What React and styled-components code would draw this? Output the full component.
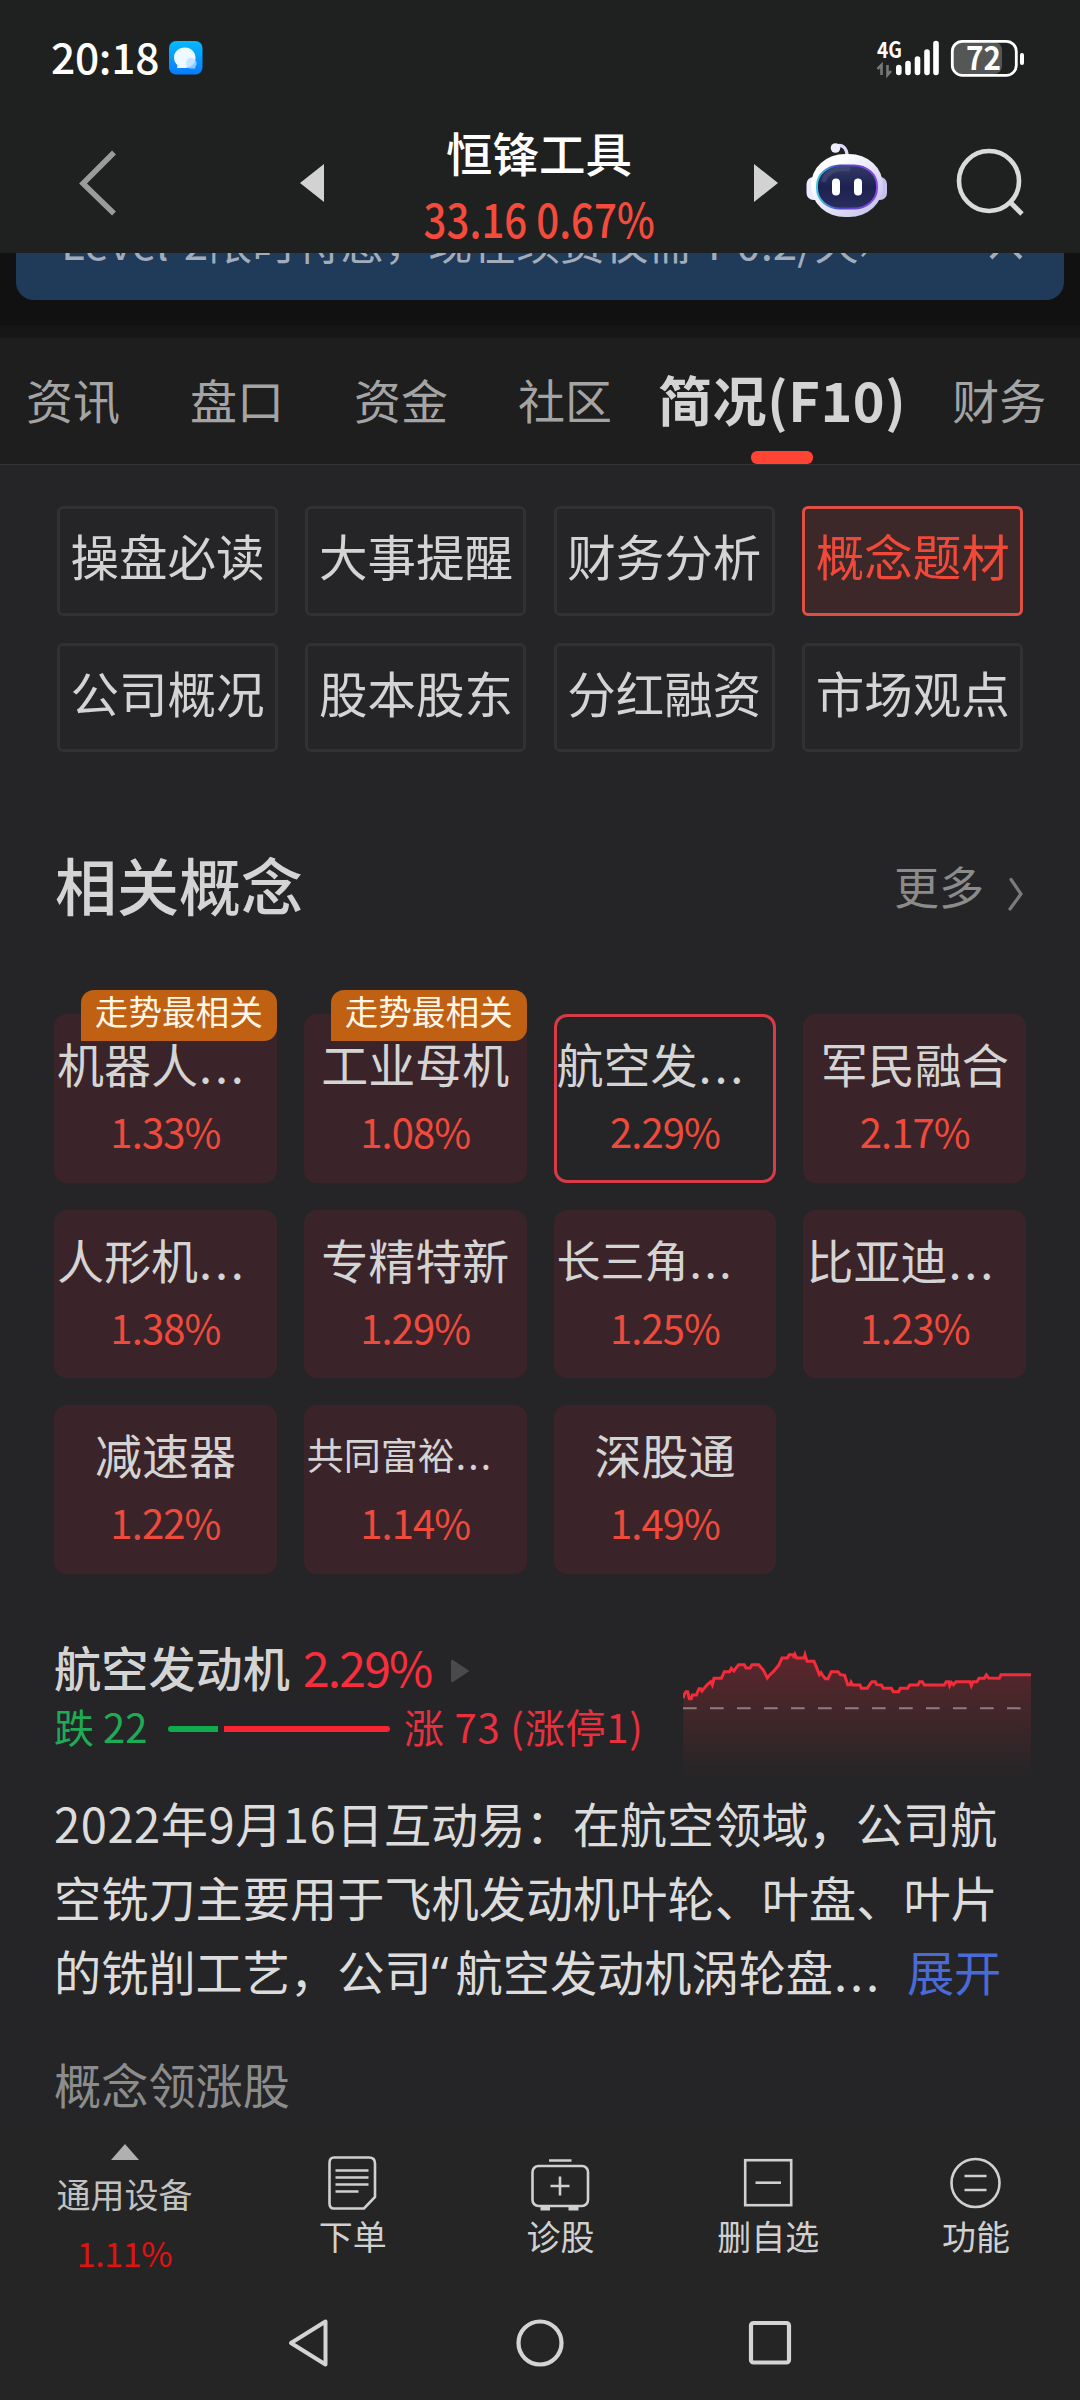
import styled, { createGlobalStyle } from "styled-components";

const subMenus = [
  "操盘必读", "大事提醒", "财务分析", "概念题材",
  "公司概况", "股本股东", "分红融资", "市场观点",
];

const concepts = [
  { name: "机器人", cut: true, rate: "1.33%", badge: true },
  { name: "工业母机", rate: "1.08%", badge: true },
  { name: "航空发", cut: true, rate: "2.29%", active: true },
  { name: "军民融合", rate: "2.17%" },
  { name: "人形机", cut: true, rate: "1.38%" },
  { name: "专精特新", rate: "1.29%" },
  { name: "长三角", cut: true, rate: "1.25%", size: 44 },
  { name: "比亚迪", cut: true, rate: "1.23%" },
  { name: "减速器", rate: "1.22%" },
  { name: "共同富裕", cut: true, rate: "1.14%", size: 37 },
  { name: "深股通", rate: "1.49%" },
];

const linePoints =
  "70,234 72,224 78,215 83,215 88,236 94,236 97,225 109,225 117,206 122,206 126,213 134,203 140,196 152,185 157,195 162,175 184,175 193,155 209,155 214,145 222,153 228,144 236,134 253,134 258,144 270,144 276,134 296,134 310,150 317,164 322,174 330,164 340,155 356,136 366,114 382,114 388,104 400,104 402,114 405,104 410,114 432,114 435,104 441,124 462,124 470,143 478,164 483,158 488,166 496,176 504,176 514,155 534,155 541,164 554,166 563,194 570,194 573,186 578,195 600,195 604,205 622,205 631,191 636,185 646,185 650,194 664,195 670,205 694,205 700,215 716,215 721,205 743,205 749,195 774,195 779,185 787,185 793,195 853,195 859,185 866,185 869,197 874,187 880,194 888,185 930,185 934,197 939,185 951,185 957,175 973,175 979,165 986,174 1018,175 1023,164 1113,164";

const StatusIcons = () => (
  <svg width="150" height="40" viewBox="0 0 150 40">
    <text x="1" y="20" fontSize="22" fontWeight="700" fill="#fff" textLength="25" lengthAdjust="spacingAndGlyphs">4G</text>
    <path d="M5.500 37V27L1.500 31M11.500 27V37L15 33" stroke="#777" strokeWidth="2.600" fill="none" />
    <path d="M22.800 29.500V34.500M32 25.500V34.500M41.500 21V34.500M51 14V34.500M60 5.500V34.500" stroke="#fff" strokeWidth="5.600" strokeLinecap="round" />
    <rect x="77" y="4" width="49" height="32" rx="8" fill="#555756" />
    <rect x="76.300" y="3.300" width="64" height="34" rx="10" stroke="#fff" strokeWidth="2.800" fill="none" />
    <text x="90" y="32" fontSize="33" fontWeight="700" fill="#fff" textLength="35" lengthAdjust="spacingAndGlyphs">72</text>
    <rect x="144" y="15" width="4" height="12" rx="2" fill="#fff" />
  </svg>
);

const MessageIcon = () => (
  <svg width="34" height="34" viewBox="0 0 34 34">
    <defs>
      <linearGradient id="msg" x1="0" y1="0" x2="0" y2="1">
        <stop offset="0" stopColor="#05b9ff" />
        <stop offset="1" stopColor="#087bff" />
      </linearGradient>
    </defs>
    <rect width="33.500" height="33.500" rx="7" fill="url(#msg)" />
    <path d="M16 6.500C9.500 6.500 5 11 5 16.500c0 3.500 1.700 6 3.500 7.700L8 27h8c6 0 10.500-4.500 10.500-10.300S22 6.500 16 6.500z" fill="#edf8ff" />
    <path d="M21 17a5.500 5.500 0 0 0 0 10.500h5.500l-.4-1.600C30 22 26 16 21 17z" fill="#b5dfff" opacity=".75" />
  </svg>
);

const Robot = () => (
  <svg width="82" height="78" viewBox="0 0 82 78">
    <defs>
      <linearGradient id="shell" x1="0" y1="0" x2="1" y2="1">
        <stop offset="0.250" stopColor="#ffffff" />
        <stop offset="1" stopColor="#bdb9ea" />
      </linearGradient>
      <linearGradient id="rim" x1="0" y1="0" x2="1" y2="0">
        <stop offset="0" stopColor="#45c6e8" />
        <stop offset="0.400" stopColor="#4a3fc0" />
        <stop offset="1" stopColor="#8a4be8" />
      </linearGradient>
      <linearGradient id="face" x1="0" y1="0" x2="0" y2="1">
        <stop offset="0" stopColor="#343a66" />
        <stop offset="0.500" stopColor="#1c2150" />
        <stop offset="1" stopColor="#2a2e5e" />
      </linearGradient>
    </defs>
    <path d="M29 7C36 3 41 8 41 16" stroke="#dcdaf6" strokeWidth="3.400" fill="none" />
    <circle cx="29.500" cy="8" r="4.800" fill="#eeedff" />
    <rect x="0.500" y="37" width="16" height="23" rx="7" fill="#eceaff" />
    <rect x="65" y="37" width="16" height="23" rx="7" fill="#c4c0f0" />
    <rect x="5" y="14" width="72" height="63" rx="34" ry="31" fill="url(#shell)" />
    <rect x="11" y="25.500" width="60" height="43" rx="23" ry="20" fill="url(#face)" stroke="url(#rim)" strokeWidth="2" />
    <path d="M18 40c3-9 13-12 24-11" stroke="#555b85" strokeWidth="5" fill="none" opacity=".45" strokeLinecap="round" />
    <rect x="26" y="38.500" width="8" height="17" rx="4" fill="#fff" />
    <rect x="48" y="38.500" width="8" height="17" rx="4" fill="#fff" />
  </svg>
);

const toolItems = [
  {
    label: "下单",
    icon: (
      <>
        <path d="M12 2.500H47Q53 2.500 53 8.500V42L42 53.500H12Q7.500 53.500 7.500 48.500V8Q7.500 2.500 12 2.500Z" />
        <path d="M13.500 15.500H46.500M13.500 22.500H46.500M13.500 29.500H46.500M13.500 36.500H36.500" />
      </>
    ),
  },
  {
    label: "诊股",
    icon: (
      <>
        <path d="M19 5.500H41.500M30 21.500V40.500M20.500 31H39.500" />
        <rect x="2.500" y="11" width="55.500" height="40" rx="6" />
        <path d="M10.500 53.500H20M38.500 53.500H48.500" strokeWidth="4" />
      </>
    ),
  },
  {
    label: "删自选",
    icon: (
      <>
        <rect x="7.200" y="5.200" width="46" height="45" />
        <path d="M17.500 27.700H43" />
      </>
    ),
  },
  {
    label: "功能",
    icon: (
      <>
        <circle cx="30.500" cy="28" r="24" />
        <path d="M19.500 21H41.500M19.500 35H41.500" />
      </>
    ),
  },
];

const App = () => {
  return (
    <Phone>
      <GlobalStyle />

      <StatusBar>
        <Clock>20:18</Clock>
        <MessageIcon />
        <StatusRight><StatusIcons /></StatusRight>
      </StatusBar>

      <Header>
        <svg width="40" height="68" viewBox="0 0 40 68">
          <path d="M36 3.500L5 34.500L36 64.500" stroke="#9b9b9b" strokeWidth="5.500" fill="none" />
        </svg>
        <PrevIcon width="24" height="38" viewBox="0 0 24 38"><path d="M0 19L24 0V38Z" fill="#d2d2d2" /></PrevIcon>
        <StockTitle>
          <StockName>恒锋工具</StockName>
          <StockPrice>33.16 0.67%</StockPrice>
        </StockTitle>
        <svg width="24" height="38" viewBox="0 0 24 38"><path d="M24 19L0 0V38Z" fill="#d2d2d2" /></svg>
        <RobotBtn><Robot /></RobotBtn>
        <svg width="70" height="70" viewBox="0 0 70 70">
          <circle cx="33" cy="33" r="30" stroke="#dadada" strokeWidth="4.600" fill="none" />
          <path d="M54 54L66 66" stroke="#dadada" strokeWidth="4.800" />
        </svg>
      </Header>

      <Promo>
        <Banner>
          <BannerText>Level-2限时特惠，现在续费仅需￥0.2/天›</BannerText>
          <svg width="34" height="60" viewBox="0 0 34 60">
            <path d="M2 17L32 47M32 17L2 47" stroke="#a3adba" strokeWidth="4" />
          </svg>
        </Banner>
      </Promo>

      <Tabs>
        <Tab>资讯</Tab>
        <Tab>盘口</Tab>
        <Tab>资金</Tab>
        <Tab>社区</Tab>
        <Tab $active>简况(F10)</Tab>
        <Tab>财务</Tab>
      </Tabs>

      <Main>
        <SubMenu>
          {subMenus.map((m) => (
            <SubBtn key={m} $active={m === "概念题材"}>{m}</SubBtn>
          ))}
        </SubMenu>

        <SectionHead>
          <SectionTitle>相关概念</SectionTitle>
          <More>
            更多
            <svg width="16" height="36" viewBox="0 0 16 36">
              <path d="M3 3.500L13 18L2 33" stroke="#7b7b7b" strokeWidth="3.200" fill="none" strokeLinecap="round" />
            </svg>
          </More>
        </SectionHead>

        <CardGrid>
          {concepts.map((c) => (
            <Card key={c.name} $active={c.active}>
              {c.badge && <Badge>走势最相关</Badge>}
              <CardName $cut={c.cut} $size={c.size}>
                {c.name}{c.cut && <Dots>...</Dots>}
              </CardName>
              <CardRate>{c.rate}</CardRate>
            </Card>
          ))}
        </CardGrid>

        <Detail>
          <div>
            <DetailTop>
              <DetailName>航空发动机</DetailName>
              <DetailRate>2.29%</DetailRate>
              <svg width="20" height="24" viewBox="0 0 20 24"><path d="M1 2Q1 0 3 1L18 11Q20 12 18 13L3 23Q1 24 1 22Z" fill="#4a4a4c" /></svg>
            </DetailTop>
            <UpDown>
              <Down>跌 22</Down>
              <DownLine />
              <UpLine />
              <Up>涨 73 (涨停1)</Up>
            </UpDown>
          </div>
          <Chart viewBox="69 75 1044 405">
            <defs>
              <linearGradient id="area" x1="0" y1="0" x2="0" y2="1">
                <stop offset="0" stopColor="#ff2d3c" stopOpacity=".25" />
                <stop offset="1" stopColor="#ff2d3c" stopOpacity="0" />
              </linearGradient>
            </defs>
            <polygon points={`69,470 ${linePoints} 1113,470`} fill="url(#area)" />
            <path d="M69 265H1113" stroke="#8d7c80" strokeWidth="6" strokeDasharray="41 40" />
            <polyline points={linePoints} fill="none" stroke="#f52b3a" strokeWidth="9" />
          </Chart>
        </Detail>

        <Desc>
          <div><Wide>2022年9月16日</Wide>互动易：在航空领域，公司航</div>
          <div>空铣刀主要用于飞机发动机叶轮、叶盘、叶片</div>
          <div>的铣削工艺，公司<Quote>“</Quote>航空发动机涡轮盘<Dots>...</Dots><Expand>展开</Expand></div>
        </Desc>

        <LeadTitle>概念领涨股</LeadTitle>
      </Main>

      <ToolBar>
        <Industry>
          <svg width="28" height="16" viewBox="0 0 28 16"><path d="M14 0L28 16H0Z" fill="#b0b0b0" /></svg>
          <IndustryName>通用设备</IndustryName>
          <IndustryRate>1.11%</IndustryRate>
        </Industry>
        {toolItems.map((t) => (
          <Tool key={t.label}>
            <svg width="61" height="56" viewBox="0 0 61 56" fill="none" stroke="#d0d0d0" strokeWidth="2.600">{t.icon}</svg>
            <span>{t.label}</span>
          </Tool>
        ))}
      </ToolBar>

      <SystemNav>
        <svg width="44" height="50" viewBox="0 0 44 50">
          <path d="M38.500 3.500V46.500L4 25Z" stroke="#d4d4d4" strokeWidth="4" strokeLinejoin="round" fill="none" />
        </svg>
        <svg width="50" height="50" viewBox="0 0 50 50">
          <circle cx="25" cy="25" r="21.500" stroke="#d4d4d4" strokeWidth="4.200" fill="none" />
        </svg>
        <svg width="44" height="46" viewBox="0 0 44 46">
          <rect x="3" y="3" width="38" height="39.500" rx="2.500" stroke="#d4d4d4" strokeWidth="4.200" fill="none" />
        </svg>
      </SystemNav>
    </Phone>
  );
};

export default App;

const GlobalStyle = createGlobalStyle`
  body {
    margin: 0;
    background: #252527;
  }

  * {
    box-sizing: border-box;
  }

  svg {
    display: block;
    flex-shrink: 0;
    overflow: visible;
  }
`;

const Phone = styled.div`
  width: 1080px;
  height: 2400px;
  overflow: hidden;
  display: flex;
  flex-direction: column;
  background: #252527;
  color: #d4d4d4;
  font-family: "Noto Sans CJK SC", sans-serif;
  white-space: nowrap;
`;

// 状态栏
const StatusBar = styled.div`
  height: 112px;
  padding: 4px 54px 0 51px;
  display: flex;
  align-items: center;
  background: #1f2120;
`;

const Clock = styled.div`
  width: 118px;
  margin-top: -6px;
  font-size: 42.5px;
  font-weight: 500;
  letter-spacing: -0.3px;
  color: white;
`;

const StatusRight = styled.div`
  margin-left: auto;
`;

// 顶部股票标题
const Header = styled.div`
  height: 141px;
  padding: 0 54px 0 78px;
  display: flex;
  align-items: center;
  background: #1f2120;
`;

const PrevIcon = styled.svg`
  margin-left: 182px;
`;

const StockTitle = styled.div`
  flex: 1;
  display: flex;
  flex-direction: column;
  align-items: center;
  padding-top: 4px;
`;

const StockName = styled.div`
  font-size: 46.5px;
  line-height: 66px;
  font-weight: 500;
  color: white;
`;

const StockPrice = styled.div`
  font-size: 47px;
  line-height: 66px;
  font-weight: 500;
  color: #f44b3c;
  transform: scaleX(0.855);
`;

const RobotBtn = styled.div`
  margin: -8px 68px 0 28px;
`;

// 广告条
const Promo = styled.div`
  height: 85px;
  padding: 0 16px;
  background: #111111;
  border-bottom: 13px solid #161616;
`;

const Banner = styled.div`
  height: 47px;
  padding: 0 41px 0 45px;
  overflow: hidden;
  display: flex;
  align-items: flex-start;
  justify-content: space-between;
  border-radius: 0 0 18px 18px;
  background: #203a5a;

  > * {
    margin-top: -42px;
  }
`;

const BannerText = styled.div`
  font-size: 44px;
  line-height: 60px;
  color: #a3adba;
`;

// 页签
const Tabs = styled.div`
  height: 127px;
  padding: 0 0 0 26px;
  display: flex;
  background: #1e1e1e;
  border-bottom: 1px solid #333334;
`;

const Tab = styled.div`
  height: 126px;
  margin-right: ${(p) => (p.$active ? "46px" : "70px")};
  font-size: ${(p) => (p.$active ? "54px" : "47px")};
  font-weight: ${(p) => (p.$active ? 700 : 400)};
  line-height: 121px;
  color: ${(p) => (p.$active ? "#d4d4d4" : "#a4a4a4")};

  ${(p) => p.$active && `
    margin-left: -24px;
    letter-spacing: 0.6px;

    &::after {
      content: "";
      display: block;
      width: 62px;
      height: 13px;
      margin: -8px auto 0;
      border-radius: 6px;
      background: #ff4433;
    }
  `}
`;

const Main = styled.div`
  height: 1666px;
  overflow: hidden;
`;

// 二级菜单
const SubMenu = styled.div`
  padding: 41px 0 0 57px;
  display: grid;
  grid-template-columns: repeat(4, 221px);
  grid-auto-rows: 109.5px;
  gap: 27px 27.4px;
`;

const SubBtn = styled.div`
  display: flex;
  justify-content: center;
  align-items: center;
  padding-bottom: 11px;
  border: 3px solid ${(p) => (p.$active ? "#e04f43" : "#313132")};
  border-radius: 6px;
  background: ${(p) => (p.$active ? "#3c2828" : "transparent")};
  color: ${(p) => (p.$active ? "#f04939" : "#d4d4d4")};
  font-size: 48.5px;
`;

const SectionHead = styled.div`
  height: 80px;
  margin-top: 92px;
  padding: 0 56px 0 55px;
  display: flex;
  justify-content: space-between;
  align-items: center;
`;

const SectionTitle = styled.div`
  font-size: 62px;
  font-weight: 500;
`;

const More = styled.div`
  display: flex;
  align-items: center;
  gap: 24px;
  padding-top: 2px;
  font-size: 45px;
  color: #8b8b8b;

  svg {
    margin-top: 17px;
  }
`;

// 概念卡片
const CardGrid = styled.div`
  margin: 90px 0 0 54px;
  display: grid;
  grid-template-columns: repeat(4, 222.8px);
  grid-auto-rows: 168.7px;
  gap: 27px;
`;

const Card = styled.div`
  position: relative;
  padding-top: 19px;
  border-radius: 13px;
  background: ${(p) => (p.$active ? "transparent" : "#3b2429")};
  box-shadow: ${(p) => (p.$active ? "inset 0 0 0 3px #d93a47" : "none")};
`;

const Badge = styled.div`
  position: absolute;
  top: -24px;
  right: 0;
  width: 196px;
  height: 51px;
  border-radius: 13px 13px 13px 0;
  background: #c06013;
  color: #fff6e6;
  font-size: 33.6px;
  line-height: 41px;
  text-align: center;
`;

const CardName = styled.div`
  padding-left: ${(p) => (p.$cut ? "3px" : "0")};
  text-align: ${(p) => (p.$cut ? "left" : "center")};
  font-size: ${(p) => p.$size || 47}px;
  line-height: 60px;
`;

const Dots = styled.span`
  margin-left: 1px;
  letter-spacing: 0.06em;
`;

const CardRate = styled.div`
  margin-top: 8px;
  text-align: center;
  font-size: 40px;
  line-height: 60px;
  letter-spacing: -0.9px;
  color: #f04a3c;
`;

// 概念详情
const Detail = styled.div`
  margin-top: 62px;
  padding: 0 49px 0 54px;
  display: flex;
  justify-content: space-between;
  align-items: flex-start;
`;

const DetailTop = styled.div`
  display: flex;
  align-items: center;
  height: 60px;

  svg {
    margin: 9px 0 0 19px;
  }
`;

const DetailName = styled.div`
  font-size: 47.2px;
  font-weight: 500;
`;

const DetailRate = styled.div`
  margin-left: 13px;
  font-size: 48px;
  letter-spacing: -1.8px;
  color: #fa2d3c;
`;

const UpDown = styled.div`
  display: flex;
  align-items: center;
  height: 60px;
  font-size: 40px;
`;

const Down = styled.div`
  width: 114px;
  color: #1eab55;
`;

const DownLine = styled.div`
  width: 50px;
  height: 6px;
  margin: 6px 6px 0 0;
  border-radius: 3px 0 0 3px;
  background: #0eac4c;
`;

const UpLine = styled.div`
  width: 166px;
  height: 6px;
  margin-top: 6px;
  border-radius: 0 3px 3px 0;
  background: #fa2534;
`;

const Up = styled.div`
  margin-left: 14px;
  letter-spacing: 0.8px;
  color: #ea303e;
`;

const Chart = styled.svg`
  width: 348px;
  height: 135px;
  margin-top: 9px;
  overflow: hidden;
`;

const Desc = styled.div`
  height: 222px;
  margin-top: 6px;
  padding-left: 54px;
  font-size: 47.2px;
  line-height: 74px;
  color: #dcdcdc;
`;

// 日期
const Wide = styled.span`
  letter-spacing: 0.5px;
`;

// 半角引号
const Quote = styled.span`
  display: inline-block;
  width: 24px;
  font-family: "Noto Sans", sans-serif;
  line-height: 1;
`;

const Expand = styled.span`
  margin-left: 25px;
  color: #4a6ad6;
`;

const LeadTitle = styled.div`
  margin-top: 46px;
  padding-left: 54px;
  font-size: 47.2px;
  line-height: 60px;
  color: #8c8c8c;
`;

// 底部工具栏
const ToolBar = styled.div`
  height: 154px;
  display: grid;
  grid-template-columns: 249px repeat(4, 207.7px);
  background: #252525;
`;

const Industry = styled.div`
  padding-top: 13px;
  display: flex;
  flex-direction: column;
  align-items: center;
  font-size: 34px;
  line-height: 40px;
`;

const IndustryName = styled.div`
  margin-top: 14px;
  color: #c2c2c2;
`;

const IndustryRate = styled.div`
  margin-top: 19px;
  letter-spacing: -0.4px;
  color: #e01212;
`;

const Tool = styled.div`
  padding-top: 24px;
  display: flex;
  flex-direction: column;
  align-items: center;
  gap: 6px;
  font-size: 34px;
  line-height: 38px;
  color: #d0d0d0;
`;

// 系统导航键
const SystemNav = styled.div`
  height: 115px;
  padding: 0 288px 0 287px;
  display: flex;
  align-items: center;
  justify-content: space-between;
  background: #252525;
`;
